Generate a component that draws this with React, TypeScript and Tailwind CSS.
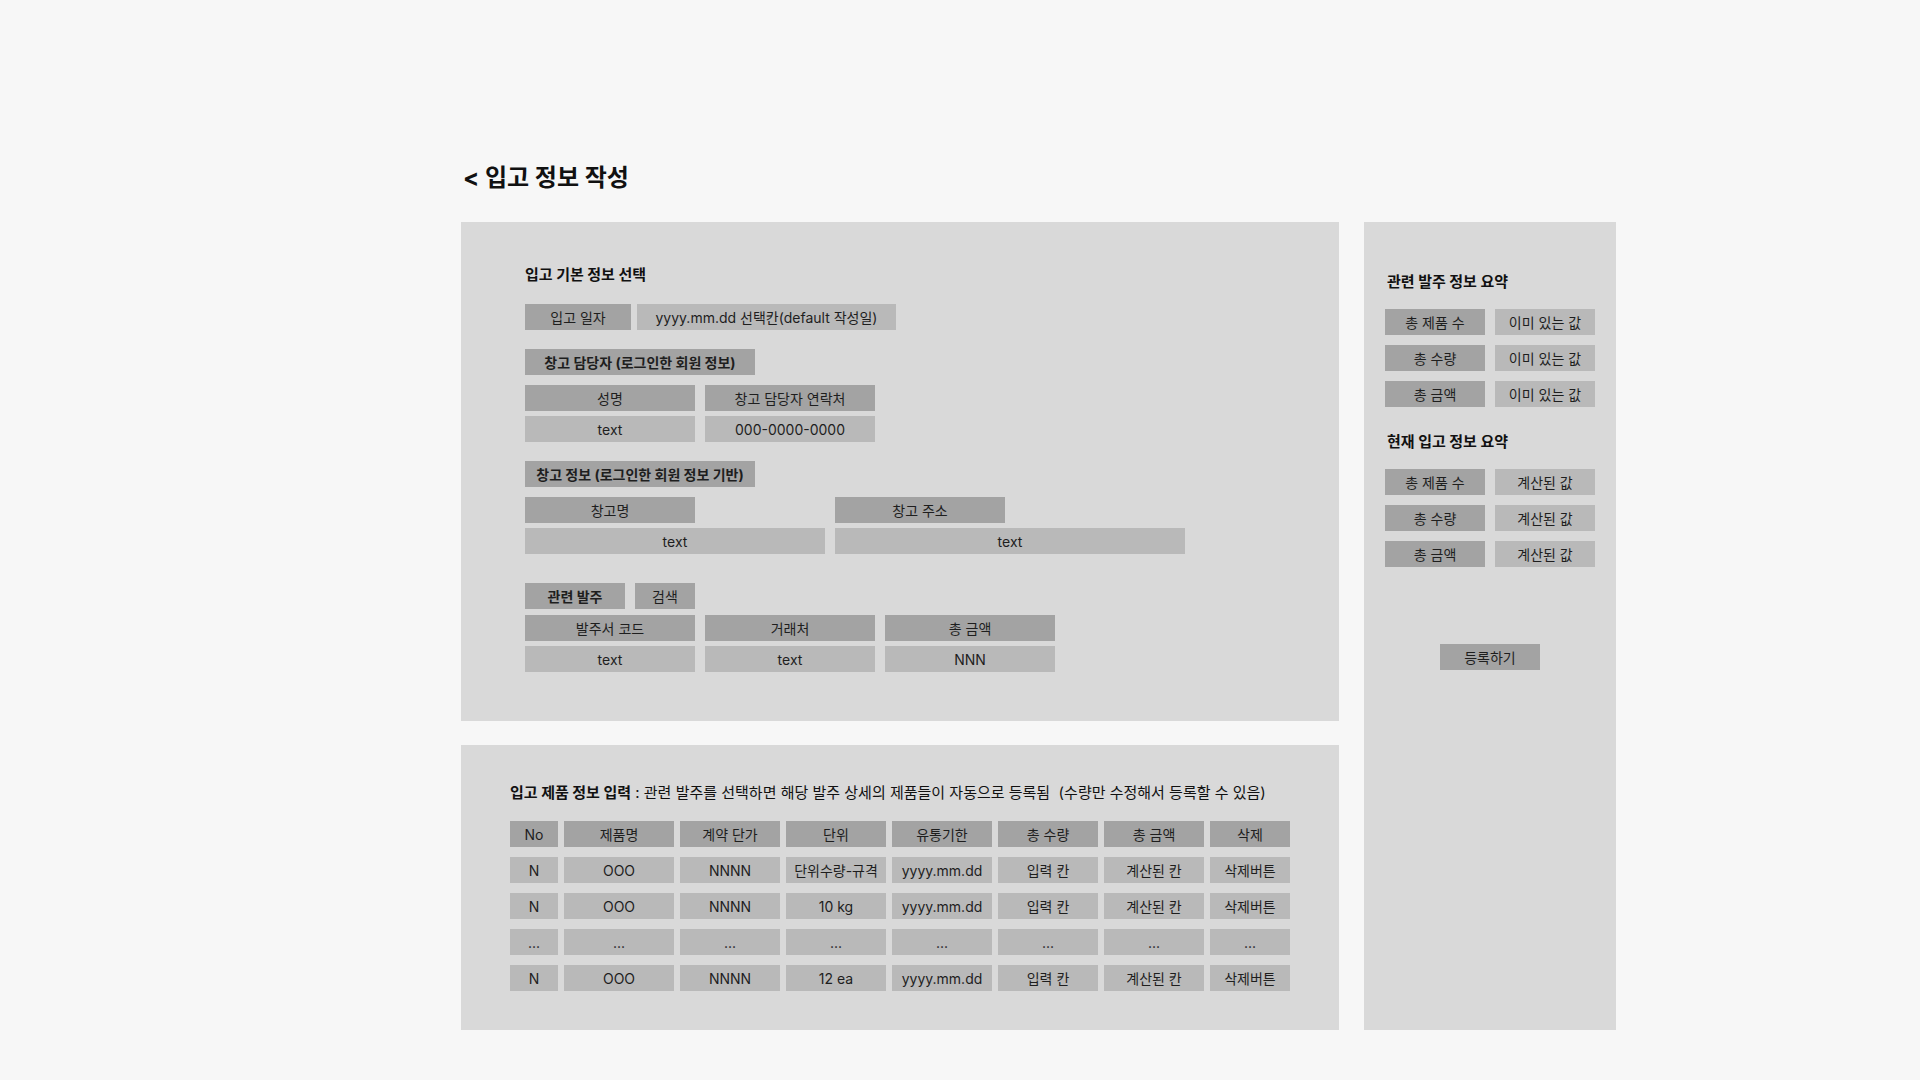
import React, { FC } from "react";

type CellProps = {
	w: string;
	dark?: boolean;
	bold?: boolean;
	children: React.ReactNode;
};

const Cell: FC<CellProps> = ({ w, dark, bold, children }) => {
	return (
		<div
			className={`${w} h-[26px] shrink-0 flex items-center justify-center text-[14px] text-[#1e1e1e] whitespace-nowrap ${
				dark ? "bg-[#a3a3a3]" : "bg-[#b9b9b9]"
			} ${bold ? "font-bold" : ""}`}
		>
			{children}
		</div>
	);
};

const colW = [
	"w-[48px]",
	"w-[110px]",
	"w-[100px]",
	"w-[100px]",
	"w-[100px]",
	"w-[100px]",
	"w-[100px]",
	"w-[80px]",
];

const headers = ["No", "제품명", "계약 단가", "단위", "유통기한", "총 수량", "총 금액", "삭제"];

const rows = [
	["N", "OOO", "NNNN", "단위수량-규격", "yyyy.mm.dd", "입력 칸", "계산된 칸", "삭제버튼"],
	["N", "OOO", "NNNN", "10 kg", "yyyy.mm.dd", "입력 칸", "계산된 칸", "삭제버튼"],
	["...", "...", "...", "...", "...", "...", "...", "..."],
	["N", "OOO", "NNNN", "12 ea", "yyyy.mm.dd", "입력 칸", "계산된 칸", "삭제버튼"],
];

const SummaryRow: FC<{ label: string; value: string }> = ({ label, value }) => (
	<div className="flex gap-[10px]">
		<Cell w="w-[100px]" dark>
			{label}
		</Cell>
		<Cell w="w-[100px]">{value}</Cell>
	</div>
);

const App: FC = () => {
	return (
		<div className="min-h-screen w-full bg-[#f7f7f7] pl-[461px] pt-[162px] font-['Inter','Noto_Sans_CJK_KR',sans-serif] text-[#111]">
			<h1 className="text-[24px] leading-[32px] font-bold pl-[2px]">&lt; 입고 정보 작성</h1>

			<div className="mt-[28px] flex gap-[25px] items-start">
				{/* left column */}
				<div className="w-[878px] flex flex-col gap-[24px]">
					{/* basic info */}
					<div className="h-[499px] bg-[#d9d9d9] pl-[64px] pt-[43px]">
						<h2 className="text-[15px] leading-[20px] font-bold">입고 기본 정보 선택</h2>

						<div className="mt-[19px] flex gap-[6px]">
							<Cell w="w-[106px]" dark>
								입고 일자
							</Cell>
							<Cell w="w-[259px]">yyyy.mm.dd 선택칸(default 작성일)</Cell>
						</div>

						<div className="mt-[19px]">
							<Cell w="w-[230px]" dark bold>
								창고 담당자 (로그인한 회원 정보)
							</Cell>
						</div>
						<div className="mt-[10px] flex flex-col gap-[5px]">
							<div className="flex gap-[10px]">
								<Cell w="w-[170px]" dark>
									성명
								</Cell>
								<Cell w="w-[170px]" dark>
									창고 담당자 연락처
								</Cell>
							</div>
							<div className="flex gap-[10px]">
								<Cell w="w-[170px]">text</Cell>
								<Cell w="w-[170px]">000-0000-0000</Cell>
							</div>
						</div>

						<div className="mt-[19px]">
							<Cell w="w-[230px]" dark bold>
								창고 정보 (로그인한 회원 정보 기반)
							</Cell>
						</div>
						<div className="mt-[10px] flex flex-col gap-[5px]">
							<div className="flex gap-[10px]">
								<Cell w="w-[170px]" dark>
									창고명
								</Cell>
								<div className="w-[120px] shrink-0" />
								<Cell w="w-[170px]" dark>
									창고 주소
								</Cell>
							</div>
							<div className="flex gap-[10px]">
								<Cell w="w-[300px]">text</Cell>
								<Cell w="w-[350px]">text</Cell>
							</div>
						</div>

						<div className="mt-[29px] flex gap-[10px]">
							<Cell w="w-[100px]" dark bold>
								관련 발주
							</Cell>
							<Cell w="w-[60px]" dark>
								검색
							</Cell>
						</div>
						<div className="mt-[6px] flex flex-col gap-[5px]">
							<div className="flex gap-[10px]">
								<Cell w="w-[170px]" dark>
									발주서 코드
								</Cell>
								<Cell w="w-[170px]" dark>
									거래처
								</Cell>
								<Cell w="w-[170px]" dark>
									총 금액
								</Cell>
							</div>
							<div className="flex gap-[10px]">
								<Cell w="w-[170px]">text</Cell>
								<Cell w="w-[170px]">text</Cell>
								<Cell w="w-[170px]">NNN</Cell>
							</div>
						</div>
					</div>

					{/* product table */}
					<div className="h-[285px] bg-[#d9d9d9] pl-[49px] pt-[38px]">
						<p className="text-[15px] leading-[20px] whitespace-pre">
							<span className="font-bold">입고 제품 정보 입력</span> : 관련 발주를 선택하면 해당 발주 상세의 제품들이 자동으로 등록됨  (수량만 수정해서 등록할 수 있음)
						</p>

						<div className="mt-[18px] flex flex-col gap-[10px]">
							<div className="flex gap-[6px]">
								{headers.map((h, i) => (
									<Cell key={h} w={colW[i]} dark>
										{h}
									</Cell>
								))}
							</div>
							{rows.map((r, ri) => (
								<div key={ri} className="flex gap-[6px]">
									{r.map((c, ci) => (
										<Cell key={ci} w={colW[ci]}>
											{c}
										</Cell>
									))}
								</div>
							))}
						</div>
					</div>
				</div>

				{/* summary */}
				<div className="w-[252px] h-[808px] bg-[#d9d9d9] pl-[21px] pt-[50px] flex flex-col">
					<h2 className="pl-[2px] text-[15px] leading-[20px] font-bold">관련 발주 정보 요약</h2>
					<div className="mt-[17px] flex flex-col gap-[10px]">
						<SummaryRow label="총 제품 수" value="이미 있는 값" />
						<SummaryRow label="총 수량" value="이미 있는 값" />
						<SummaryRow label="총 금액" value="이미 있는 값" />
					</div>

					<h2 className="mt-[25px] pl-[2px] text-[15px] leading-[20px] font-bold">현재 입고 정보 요약</h2>
					<div className="mt-[17px] flex flex-col gap-[10px]">
						<SummaryRow label="총 제품 수" value="계산된 값" />
						<SummaryRow label="총 수량" value="계산된 값" />
						<SummaryRow label="총 금액" value="계산된 값" />
					</div>

					<div className="mt-[77px] ml-[55px]">
						<Cell w="w-[100px]" dark>
							등록하기
						</Cell>
					</div>
				</div>
			</div>
		</div>
	);
};

export default App;
